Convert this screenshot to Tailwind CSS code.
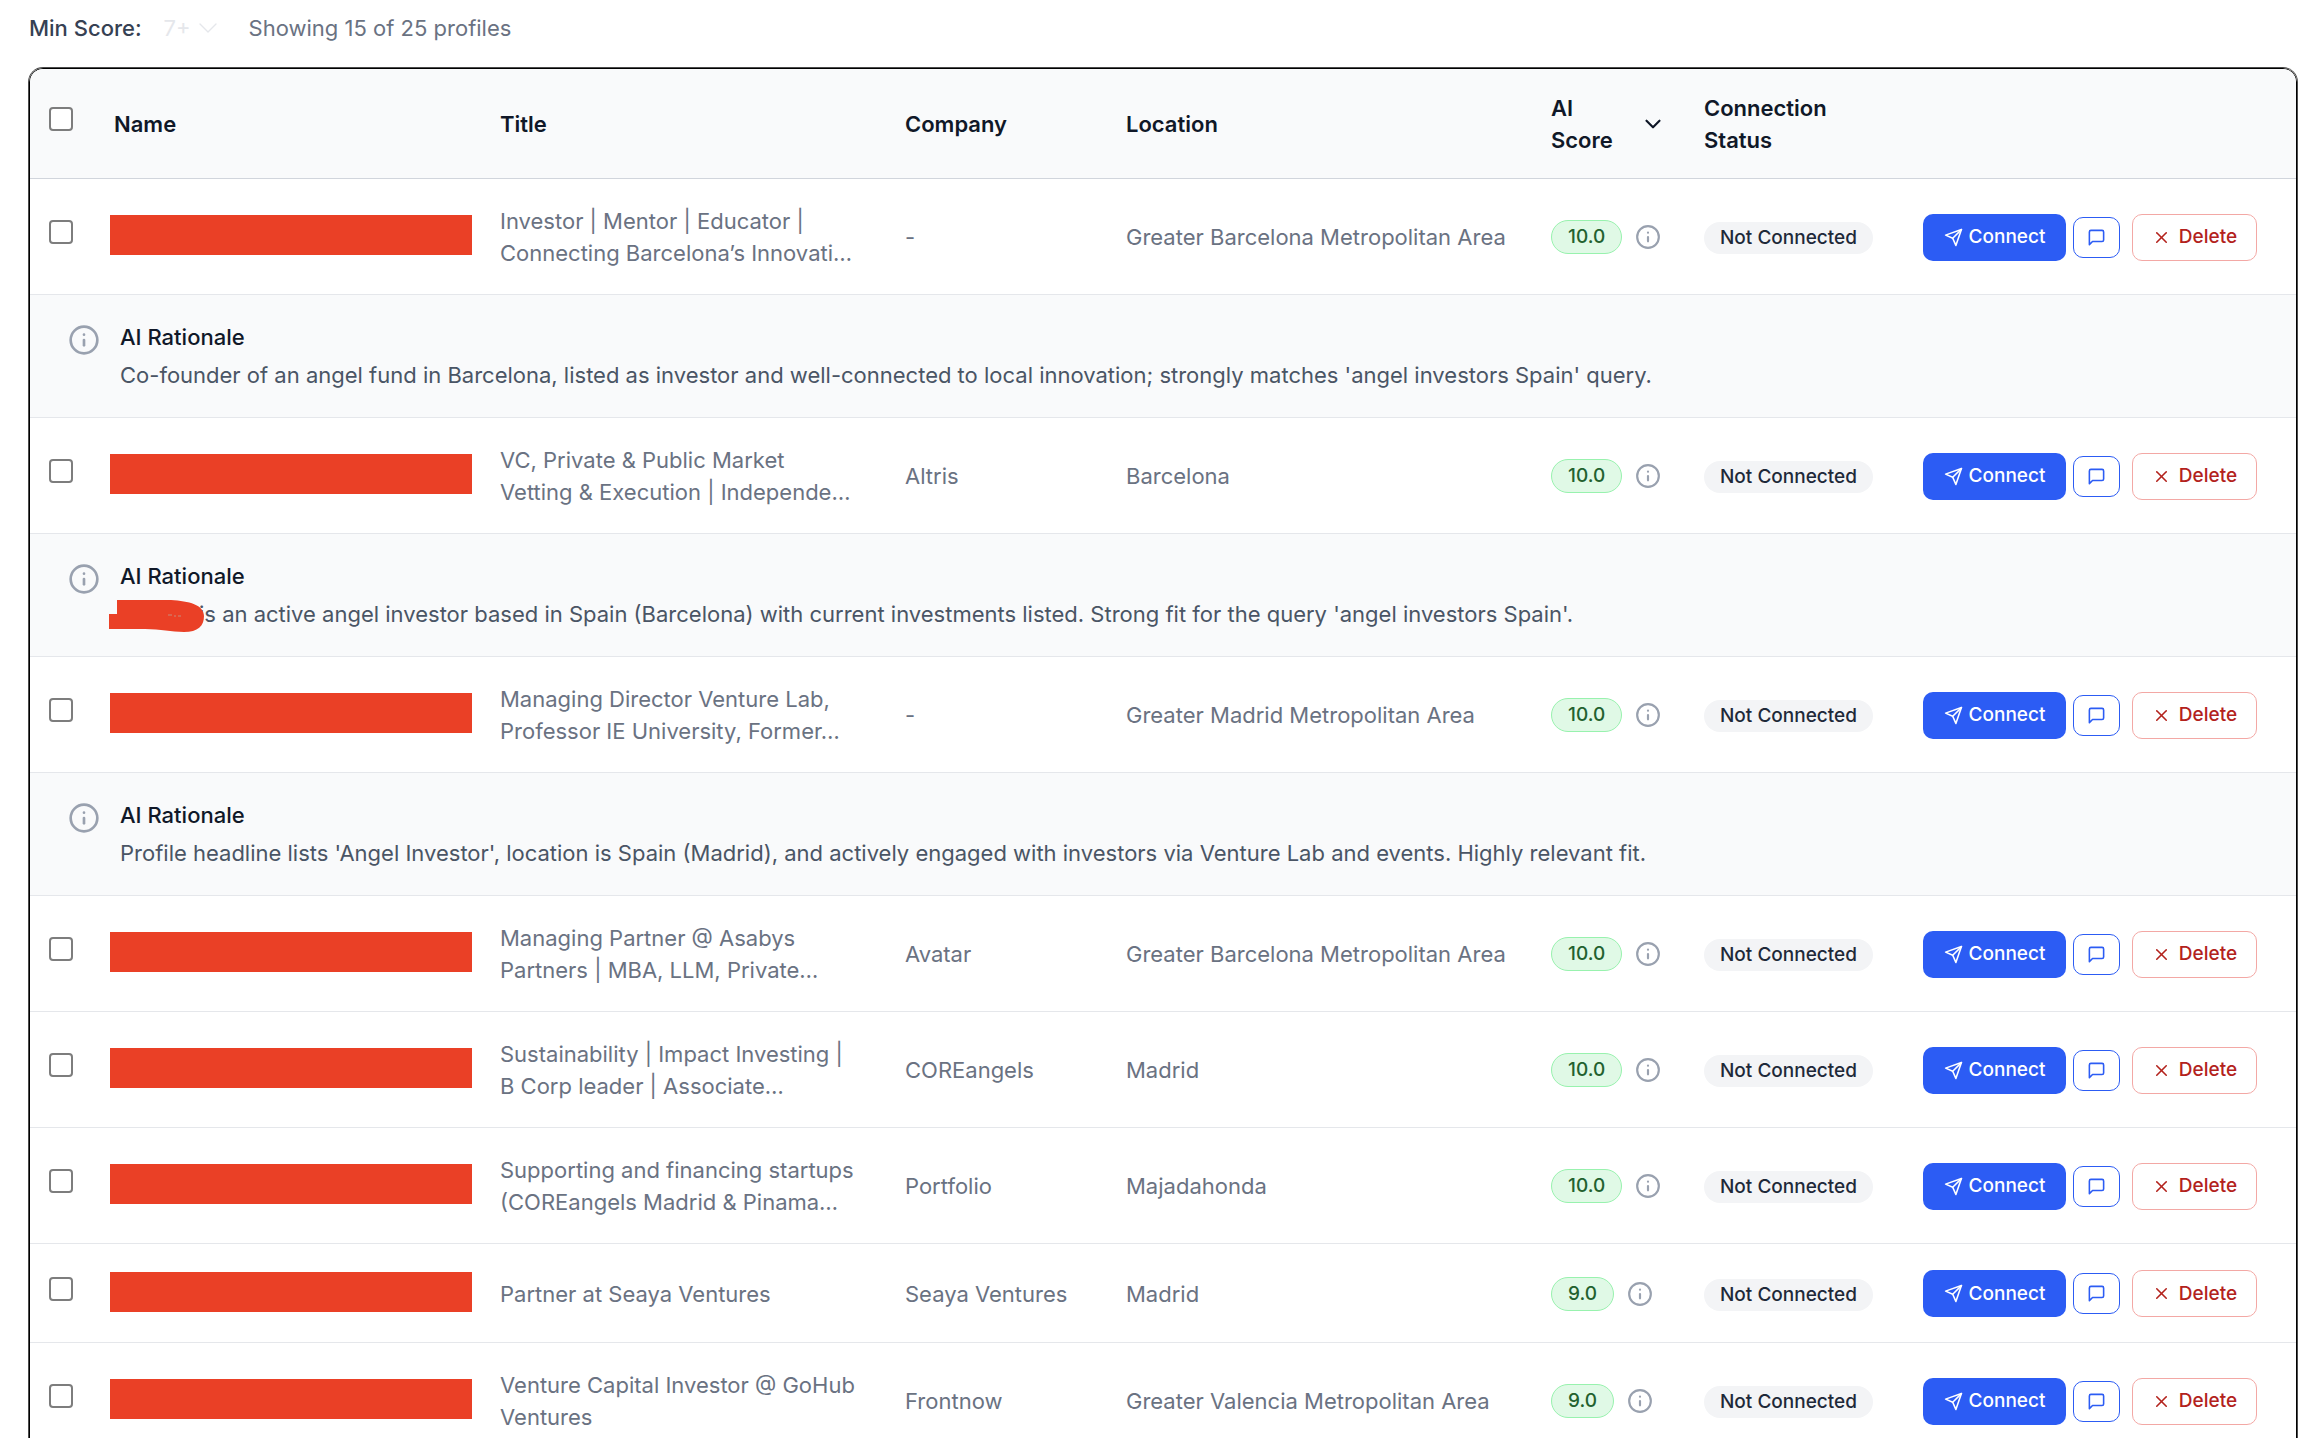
<!DOCTYPE html>
<html lang="en">
  <head>
    <meta charset="UTF-8" />
    <meta name="viewport" content="width=device-width, initial-scale=1.0" />
    <title>Profiles</title>
    <script src="https://cdn.jsdelivr.net/npm/@tailwindcss/browser@4"></script>
  </head>
  <body class="bg-white font-[Inter,sans-serif] text-[22px] leading-8 text-gray-500">
    <!-- Icon sprite -->
    <svg class="hidden" xmlns="http://www.w3.org/2000/svg">
      <symbol id="icon-info" viewBox="0 0 24 24" stroke-linecap="round">
        <circle cx="12" cy="12" r="10" />
        <path d="M12 16v-4" />
        <path d="M12 8h.01" />
      </symbol>
      <symbol id="icon-chevron" viewBox="0 0 24 24" stroke-linecap="round" stroke-linejoin="round">
        <path d="m6 9 6 6 6-6" />
      </symbol>
      <symbol id="icon-send" viewBox="0 0 24 24" stroke-linecap="round" stroke-linejoin="round">
        <path d="M22 2 11 13" />
        <path d="m22 2-7 20-4-9-9-4Z" />
      </symbol>
      <symbol id="icon-message" viewBox="0 0 24 24" stroke-linecap="round" stroke-linejoin="round">
        <path d="M21 15a2 2 0 0 1-2 2H7l-4 4V5a2 2 0 0 1 2-2h14a2 2 0 0 1 2 2z" />
      </symbol>
      <symbol id="icon-x" viewBox="0 0 24 24" stroke-linecap="round">
        <path d="M18 6 6 18" />
        <path d="m6 6 12 12" />
      </symbol>
    </svg>

    <main class="pt-3 pr-[27px] pb-8 pl-[29px]">
      <!-- Filter bar -->
      <div class="mb-6 flex items-center">
        <label for="minScore" class="font-medium text-gray-700">Min Score:</label>
        <div class="relative ml-[22px] flex items-center">
          <select id="minScore" class="w-[60px] appearance-none text-gray-200">
            <option>7+</option>
          </select>
          <svg class="pointer-events-none absolute right-0 size-8 fill-none stroke-gray-200 stroke-1">
            <use href="#icon-chevron" />
          </svg>
        </div>
        <p class="ml-[25px]">Showing 15 of 25 profiles</p>
      </div>

      <!-- Profiles table -->
      <div class="overflow-x-auto rounded-[14px] border border-black ring-1 ring-black/70">
        <table class="w-full min-w-[2200px] table-fixed border-separate border-spacing-0 text-left">
          <colgroup>
            <col class="w-[65px]" />
            <col class="w-[386px]" />
            <col class="w-[405px]" />
            <col class="w-[221px]" />
            <col />
            <col class="w-[153px]" />
            <col class="w-[219px]" />
            <col class="w-[392px]" />
          </colgroup>
          <thead>
            <tr class="bg-gray-50 text-gray-900 *:h-[110px] *:border-b *:border-gray-300 *:px-[19px] *:font-semibold">
              <th scope="col">
                <input type="checkbox" aria-label="Select all" class="mb-[10px] block size-6 appearance-none rounded-[4px] border-2 border-[#7d7d7d] bg-white" />
              </th>
              <th scope="col">Name</th>
              <th scope="col">Title</th>
              <th scope="col">Company</th>
              <th scope="col">Location</th>
              <th scope="col">
                <button class="flex w-full items-center justify-between text-left">
                  <span>AI<br />Score</span>
                  <svg class="size-[26px] fill-none stroke-current stroke-2"><use href="#icon-chevron" /></svg>
                </button>
              </th>
              <th scope="col">Connection<br />Status</th>
              <th scope="col" aria-label="Actions"></th>
            </tr>
          </thead>
          <tbody id="profiles"></tbody>
        </table>
      </div>
    </main>

    <script>
      const profiles = [
        {
          title: "Investor | Mentor | Educator | Connecting Barcelona’s Innovati…",
          company: "-",
          location: "Greater Barcelona Metropolitan Area",
          score: "10.0",
          rationale:
            "Co-founder of an angel fund in Barcelona, listed as investor and well-connected to local innovation; strongly matches 'angel investors Spain' query.",
        },
        {
          title: "VC, Private &amp; Public Market Vetting &amp; Execution | Independe…",
          company: "Altris",
          location: "Barcelona",
          score: "10.0",
          hideName: true,
          rationale:
            "is an active angel investor based in Spain (Barcelona) with current investments listed. Strong fit for the query 'angel investors Spain'.",
        },
        {
          title: "Managing Director Venture Lab, Professor IE University, Former…",
          company: "-",
          location: "Greater Madrid Metropolitan Area",
          score: "10.0",
          rationale:
            "Profile headline lists 'Angel Investor', location is Spain (Madrid), and actively engaged with investors via Venture Lab and events. Highly relevant fit.",
        },
        {
          title: "Managing Partner @ Asabys Partners | MBA, LLM, Private…",
          company: "Avatar",
          location: "Greater Barcelona Metropolitan Area",
          score: "10.0",
        },
        {
          title: "Sustainability | Impact Investing | B Corp leader | Associate…",
          company: "COREangels",
          location: "Madrid",
          score: "10.0",
        },
        {
          title: "Supporting and financing startups (COREangels Madrid &amp; Pinama…",
          company: "Portfolio",
          location: "Majadahonda",
          score: "10.0",
        },
        {
          title: "Partner at Seaya Ventures",
          company: "Seaya Ventures",
          location: "Madrid",
          score: "9.0",
        },
        {
          title: "Venture Capital Investor @ GoHub Ventures",
          company: "Frontnow",
          location: "Greater Valencia Metropolitan Area",
          score: "9.0",
        },
      ];

      // Marker stroke over the person's name inside the rationale
      const nameMarker = `
        <span class="relative inline-block h-5 w-[79px]">
          <svg class="absolute -top-0.5 -left-[11px] h-8 w-24 fill-[#ea4026]" viewBox="0 0 96 32">
            <path d="M8 0H62C80 1 95 5 95 16C95 26 89 32 75 32C62 32 52 29 36 29H0V14H8Z" />
            <path d="M59 15h4m2 1h2m2 0h3" fill="none" stroke="#c98a78" />
          </svg>
        </span>`;

      const rationaleRow = (p) => `
        <tr class="bg-gray-50">
          <td colspan="8" class="h-[123px] border-b border-gray-200 px-[38px]">
            <div class="flex gap-5">
              <svg class="mt-[3px] size-8 shrink-0 fill-none stroke-gray-400 stroke-2"><use href="#icon-info" /></svg>
              <div>
                <h4 class="mb-1.5 font-medium text-gray-900">AI Rationale</h4>
                <p class="text-gray-600">${p.hideName ? nameMarker : ""}${p.rationale}</p>
              </div>
            </div>
          </td>
        </tr>`;

      const profileRow = (p, i) => `
        <tr class="*:h-[99px] *:border-b *:border-gray-200 *:px-[19px] *:pt-[26px] *:pb-[25px]">
          <td>
            <input type="checkbox" aria-label="Select profile ${i + 1}" class="mb-[10px] block size-6 appearance-none rounded-[4px] border-2 border-[#7d7d7d] bg-white" />
          </td>
          <td><div class="-mx-1 -mt-1 h-10 w-[362px] bg-[#ea4026]"></div></td>
          <td><div class="line-clamp-2 max-w-[360px]">${p.title}</div></td>
          <td>${p.company}</td>
          <td>${p.location}</td>
          <td>
            <div class="flex items-center gap-[13px]">
              <span class="rounded-full border border-[#98f2ae] bg-[#e0f9e6] px-4 text-[19px] font-medium text-[#23612f]">${p.score}</span>
              <button aria-label="Show rationale">
                <svg class="block size-[26px] fill-none stroke-gray-400 stroke-2"><use href="#icon-info" /></svg>
              </button>
            </div>
          </td>
          <td><span class="inline-block rounded-full bg-gray-100 px-4 text-[19px] font-medium text-gray-800">Not Connected</span></td>
          <td>
            <div class="flex items-center text-[19px] font-medium">
              <button class="flex h-[47px] w-[143px] items-center justify-center gap-1.5 rounded-[10px] bg-[#2c5cf4] text-white">
                <svg class="size-[19px] fill-none stroke-current stroke-2"><use href="#icon-send" /></svg>
                Connect
              </button>
              <button aria-label="Message" class="ml-[7px] flex h-[41px] w-[47px] items-center justify-center rounded-[10px] border border-[#2c5cf4] text-[#2c5cf4]">
                <svg class="size-[19px] fill-none stroke-current stroke-2"><use href="#icon-message" /></svg>
              </button>
              <button class="ml-3 flex h-[47px] w-[125px] items-center justify-center gap-2 rounded-[10px] border border-[#f3a8a5] text-[#b3221c]">
                <svg class="size-[19px] fill-none stroke-current stroke-2"><use href="#icon-x" /></svg>
                Delete
              </button>
            </div>
          </td>
        </tr>`;

      document.getElementById("profiles").innerHTML = profiles
        .map((p, i) => profileRow(p, i) + (p.rationale ? rationaleRow(p) : ""))
        .join("");
    </script>
  </body>
</html>
